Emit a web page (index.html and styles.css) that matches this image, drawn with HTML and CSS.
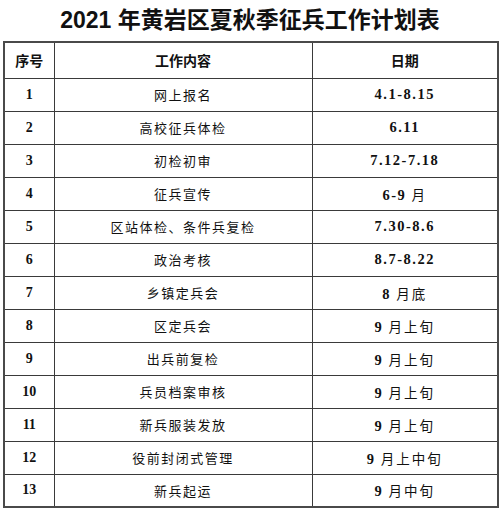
FILE: index.html
```html
<!DOCTYPE html>
<html lang="zh-CN">
<head>
<meta charset="utf-8">
<title>2021年黄岩区夏秋季征兵工作计划表</title>
<link rel="stylesheet" href="styles.css">
</head>
<body>
<h1 class="title">2021 年黄岩区夏秋季征兵工作计划表</h1>
<table class="plan">
  <colgroup>
    <col class="c-no">
    <col class="c-task">
    <col class="c-date">
  </colgroup>
  <thead>
    <tr class="head">
      <th>序号</th>
      <th>工作内容</th>
      <th>日期</th>
    </tr>
  </thead>
  <tbody>
    <tr><td class="no">1</td><td class="task">网上报名</td><td class="date">4.1-8.15</td></tr>
    <tr><td class="no">2</td><td class="task">高校征兵体检</td><td class="date">6.11</td></tr>
    <tr><td class="no">3</td><td class="task">初检初审</td><td class="date">7.12-7.18</td></tr>
    <tr><td class="no">4</td><td class="task">征兵宣传</td><td class="date">6-9 <span class="cn">月</span></td></tr>
    <tr><td class="no">5</td><td class="task">区站体检、条件兵复检</td><td class="date">7.30-8.6</td></tr>
    <tr><td class="no">6</td><td class="task">政治考核</td><td class="date">8.7-8.22</td></tr>
    <tr><td class="no">7</td><td class="task">乡镇定兵会</td><td class="date">8 <span class="cn">月底</span></td></tr>
    <tr><td class="no">8</td><td class="task">区定兵会</td><td class="date">9 <span class="cn">月上旬</span></td></tr>
    <tr><td class="no">9</td><td class="task">出兵前复检</td><td class="date">9 <span class="cn">月上旬</span></td></tr>
    <tr><td class="no">10</td><td class="task">兵员档案审核</td><td class="date">9 <span class="cn">月上旬</span></td></tr>
    <tr><td class="no">11</td><td class="task">新兵服装发放</td><td class="date">9 <span class="cn">月上旬</span></td></tr>
    <tr><td class="no">12</td><td class="task">役前封闭式管理</td><td class="date">9 <span class="cn">月上中旬</span></td></tr>
    <tr><td class="no">13</td><td class="task">新兵起运</td><td class="date">9 <span class="cn">月中旬</span></td></tr>
  </tbody>
</table>
</body>
</html>
```
FILE: styles.css
```css
html, body {
  margin: 0;
  padding: 0;
  background: #ffffff;
}

body {
  width: 500px;
  color: #111111;
  font-family: "Liberation Serif", "Noto Sans CJK SC", serif;
}

.title {
  margin: 0;
  height: 41px;
  line-height: 40px;
  text-align: center;
  font-family: "Liberation Sans", "Noto Sans CJK SC", sans-serif;
  font-size: 23px;
  font-weight: bold;
  color: #111111;
}

.plan {
  margin-left: 3px;
  width: 494px;
  border-collapse: collapse;
  table-layout: fixed;
  border: 2px solid #4a4a4a;
}

.c-no { width: 50px; }
.c-task { width: 258px; }
.c-date { width: 186px; }

.plan th,
.plan td {
  border: 1px solid #3a3a3a;
  padding: 0;
  text-align: center;
  vertical-align: middle;
}

.plan tr { height: 33px; }
.plan tr.head { height: 36px; }

.plan th {
  font-family: "Noto Sans CJK SC", sans-serif;
  font-size: 14px;
  font-weight: bold;
  color: #111111;
}

.no {
  font-family: "Liberation Serif", serif;
  font-size: 14px;
  font-weight: bold;
}

.task {
  font-family: "Noto Sans CJK SC", sans-serif;
  font-size: 13px;
  letter-spacing: 1.5px;
  color: #111111;
}

.date {
  font-family: "Liberation Serif", "Noto Sans CJK SC", serif;
  font-size: 14.5px;
  font-weight: bold;
  letter-spacing: 1.5px;
}

.date .cn {
  font-family: "Noto Sans CJK SC", sans-serif;
  font-size: 13.5px;
  font-weight: normal;
  letter-spacing: 2px;
}
```
